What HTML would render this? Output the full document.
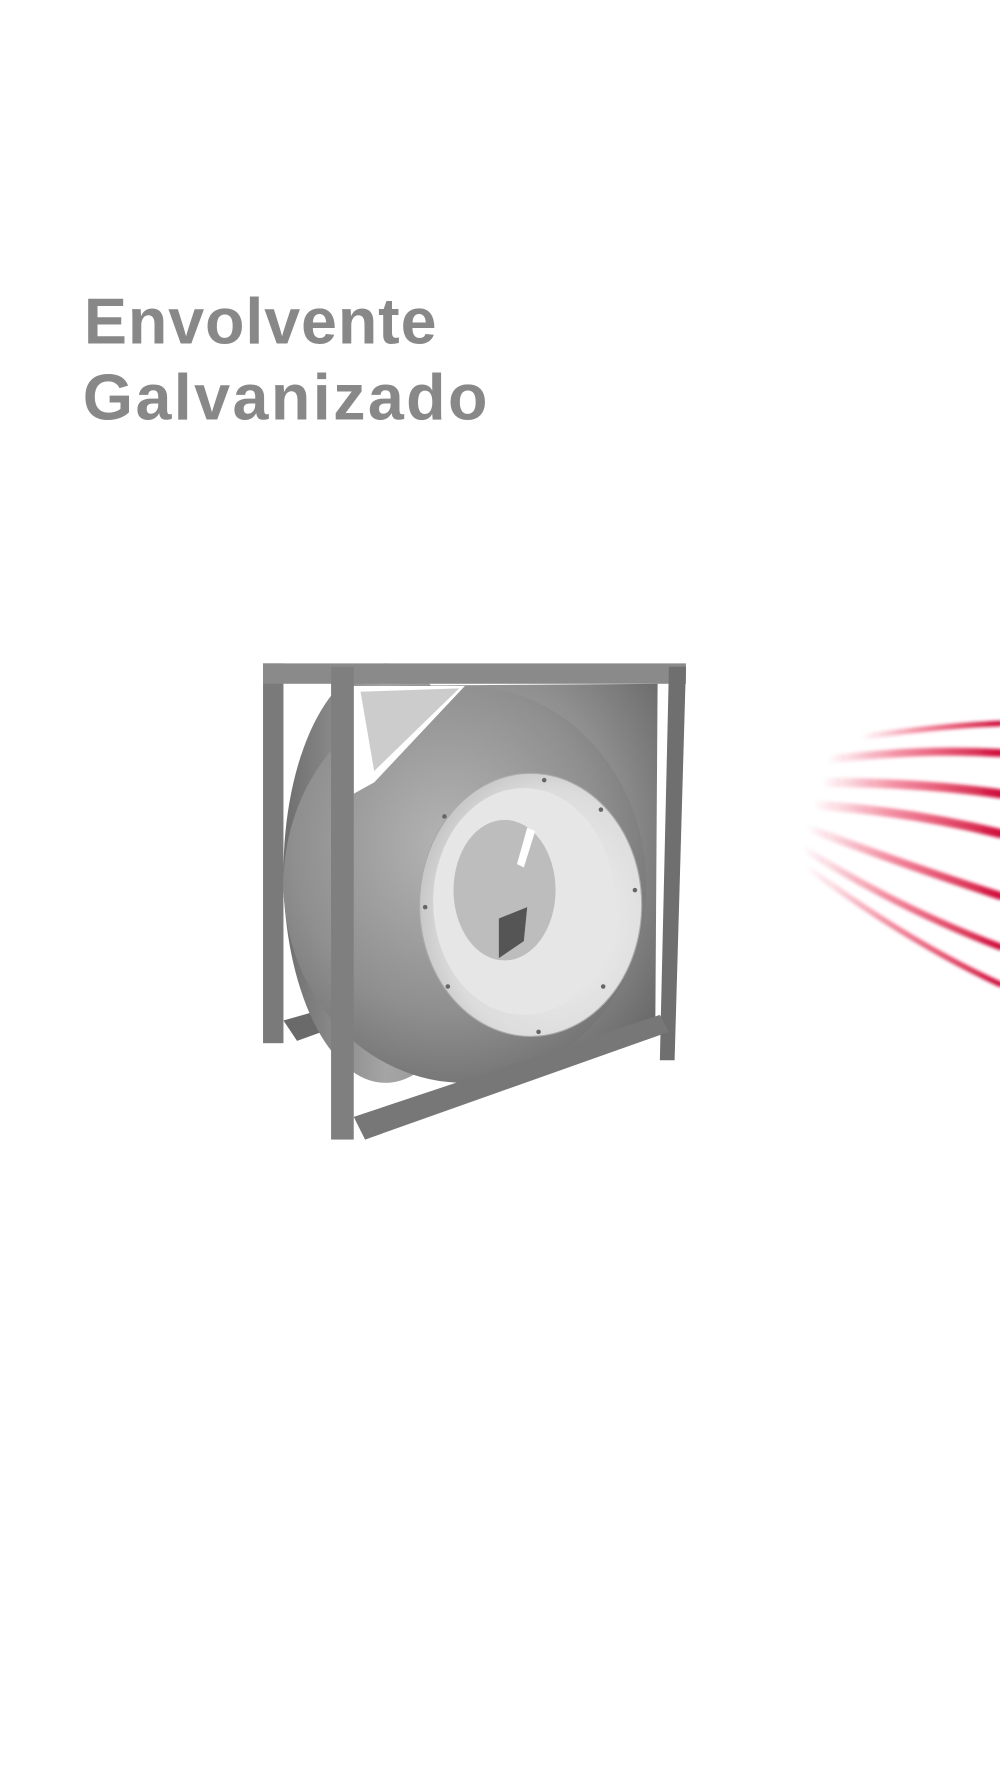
<!DOCTYPE html>
<html><head><meta charset="utf-8"><style>
html,body{margin:0;padding:0;background:#fff;}
svg{display:block;}
</style></head><body>
<svg width="1000" height="1778" viewBox="0 0 882 1568" xmlns="http://www.w3.org/2000/svg">
<defs>
<radialGradient id="g1" cx="0.45" cy="0.4" r="0.7">
<stop offset="0" stop-color="#b4b4b4"/><stop offset="0.6" stop-color="#8f8f8f"/><stop offset="1" stop-color="#6a6a6a"/>
</radialGradient>
<linearGradient id="side" x1="0" x2="1">
<stop offset="0" stop-color="#6e6e6e"/><stop offset="0.5" stop-color="#a5a5a5"/><stop offset="1" stop-color="#8a8a8a"/>
</linearGradient>
<radialGradient id="wh" cx="0.6" cy="0.55" r="0.6">
<stop offset="0" stop-color="#f4f4f4"/><stop offset="0.8" stop-color="#dcdcdc"/><stop offset="1" stop-color="#c8c8c8"/>
</radialGradient>
<linearGradient id="red" x1="0" x2="1">
<stop offset="0" stop-color="#e8234a" stop-opacity="0"/><stop offset="0.4" stop-color="#e8234a" stop-opacity="0.5"/><stop offset="1" stop-color="#d0103a"/>
</linearGradient>
<filter id="bl"><feGaussianBlur stdDeviation="1.5"/></filter>
</defs>
<text x="74" y="303" font-family="Liberation Sans, sans-serif" font-weight="bold" font-size="57" fill="#888" textLength="311" lengthAdjust="spacing">Envolvente</text>
<text x="73" y="370" font-family="Liberation Sans, sans-serif" font-weight="bold" font-size="57" fill="#888" textLength="357" lengthAdjust="spacing">Galvanizado</text>

<rect x="232" y="585" width="18" height="335" fill="#7a7a7a"/>
<polygon points="250,900 320,880 320,897 262,918" fill="#6a6a6a"/>
<ellipse cx="340" cy="770" rx="90" ry="185" fill="url(#side)"/>
<rect x="232" y="585" width="373" height="18" fill="#8a8a8a"/>
<polygon points="312,605 580,603 578,900 420,950 330,930" fill="url(#g1)"/>
<ellipse cx="410" cy="780" rx="160" ry="175" fill="url(#g1)"/>
<polygon points="312,605 410,605 330,690 312,700" fill="#fff"/>
<polygon points="318,610 405,607 330,680" fill="#9a9a9a" opacity="0.5"/>
<ellipse cx="468" cy="798" rx="98" ry="116" fill="url(#wh)" stroke="#aaa" stroke-width="1"/>
<ellipse cx="462" cy="795" rx="80" ry="100" fill="#e6e6e6"/>
<ellipse cx="445" cy="785" rx="45" ry="62" fill="#bdbdbd"/>
<polygon points="440,810 465,800 462,830 440,845" fill="#555"/>
<polygon points="465,730 472,733 462,765 456,762" fill="#fff"/>
<g fill="#666"><circle cx="480" cy="688" r="2"/><circle cx="530" cy="714" r="2"/><circle cx="560" cy="785" r="2"/><circle cx="532" cy="870" r="2"/><circle cx="475" cy="910" r="2"/><circle cx="395" cy="870" r="2"/><circle cx="375" cy="800" r="2"/><circle cx="392" cy="720" r="2"/></g>
<rect x="292" y="588" width="20" height="417" fill="#7f7f7f"/>
<rect x="580" y="588" width="25" height="10" fill="#8a8a8a"/>
<polygon points="590,588 605,588 595,935 582,935" fill="#6f6f6f"/>
<polygon points="312,985 582,895 590,910 322,1005" fill="#777"/>
<g fill="none" stroke-linecap="round" filter="url(#bl)">
<path d="M760 650 Q830 640 882 638" stroke="url(#red)" stroke-width="5"/>
<path d="M730 670 Q810 660 882 664" stroke="url(#red)" stroke-width="7"/>
<path d="M725 690 Q810 690 882 700" stroke="url(#red)" stroke-width="8"/>
<path d="M718 710 Q800 715 882 735" stroke="url(#red)" stroke-width="8"/>
<path d="M712 730 Q790 760 882 790" stroke="url(#red)" stroke-width="7"/>
<path d="M708 748 Q790 800 882 835" stroke="url(#red)" stroke-width="6"/>
<path d="M712 765 Q800 830 882 868" stroke="url(#red)" stroke-width="5"/>
</g>
</svg>
</body></html>
